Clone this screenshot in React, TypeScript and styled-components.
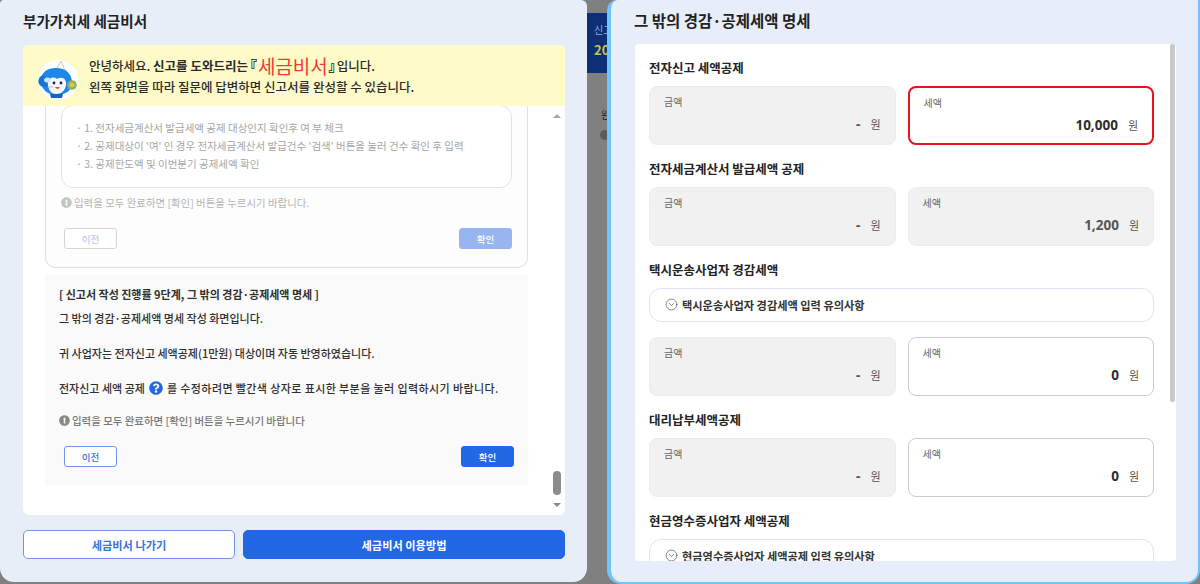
import React from "react";
import styled, { createGlobalStyle } from "styled-components";
import { CircleChevronDown } from "lucide-react";
import { FaExclamationCircle, FaQuestionCircle } from "react-icons/fa";

const Global = createGlobalStyle`
  html, body { margin: 0; padding: 0; background: #808080; }
  * { box-sizing: border-box; }
  body { font-family: "Noto Sans CJK KR", "Noto Sans", sans-serif; }
`;

const Page = styled.div`
  display: flex;
  width: 1200px;
  height: 584px;
  overflow: hidden;
  background: #808080;
`;

const LeftPanel = styled.section`
  width: 587px;
  height: 582px;
  flex: none;
  display: flex;
  flex-direction: column;
  padding: 0 22px 0 23px;
  background: #e8eef8;
  border-radius: 4px 6px 14px 14px;
`;

const PanelTitle = styled.h2<{ $large?: boolean }>`
  height: 45px;
  flex: none;
  margin: 0;
  padding-bottom: 5px;
  display: flex;
  align-items: center;
  font-size: ${(p) => (p.$large ? "15.5px" : "14.6px")};
  font-weight: 700;
  color: #222;
`;

const Body = styled.div`
  height: 470px;
  flex: none;
  display: flex;
  flex-direction: column;
  background: #fff;
  border-radius: 6px;
  overflow: hidden;
`;

const Banner = styled.div`
  height: 61px;
  flex: none;
  display: flex;
  align-items: center;
  gap: 11px;
  padding-left: 15px;
  background: #fffbc8;
`;

const MascotSlot = styled.div`
  width: 40px;
  height: 40px;
  flex: none;
  margin-top: 9px;
`;

const BannerText = styled.div`
  display: flex;
  flex-direction: column;
  font-size: 12.5px;
  font-weight: 500;
  color: #2a2a2a;
`;

const BannerLine = styled.div`
  display: flex;
  align-items: center;
  height: 21px;
  white-space: pre;
`;

const Strong = styled.strong`
  font-weight: 700;
`;

const RedWord = styled.span`
  font-size: 19px;
  font-weight: 400;
  line-height: 21px;
  color: #ee3b30;
`;

const Bracket = styled.span`
  font-feature-settings: "palt";
  font-weight: 900;
  font-size: 14px;
  line-height: 21px;
  color: #111;
`;

const OpenBracket = styled(Bracket)`
  margin: 0 1px 0 2px;
`;

const CloseBracket = styled(Bracket)`
  margin: 0 1px;
`;

const ScrollRow = styled.div`
  flex: 1;
  min-height: 0;
  display: flex;
`;

const Scroller = styled.div`
  flex: 1;
  min-width: 0;
  display: flex;
  flex-direction: column;
  justify-content: flex-end;
  gap: 6px;
  padding: 0 21px 30px 22px;
  overflow: hidden;
`;

const DoneCard = styled.div`
  flex: none;
  padding: 0 15px 18px 15px;
  background: #fdfdfd;
  border: 1px solid #e0e0e0;
  border-top: none;
  border-radius: 0 0 10px 10px;
`;

const NoteBox = styled.ul`
  margin: 0;
  height: 83px;
  padding: 13px 14px;
  list-style: none;
  display: flex;
  flex-direction: column;
  border: 1px solid #e2e2e2;
  border-radius: 12px;
  background: #fff;
`;

const NoteItem = styled.li`
  height: 18px;
  font-size: 10.5px;
  line-height: 18px;
  color: #a6a6a6;
  white-space: nowrap;
`;

const Hint = styled.div<{ $dim?: boolean }>`
  display: flex;
  align-items: center;
  gap: 2px;
  font-size: 10.45px;
  color: ${(p) => (p.$dim ? "#b4b4b4" : "#777")};
  svg { color: ${(p) => (p.$dim ? "#c4c4c4" : "#888")}; flex: none; }
`;

const DoneHint = styled(Hint)`
  height: 28px;
  margin-bottom: 12px;
`;

const Actions = styled.div`
  display: flex;
  justify-content: space-between;
  padding: 0 0 0 3px;
`;

const SmallButton = styled.button<{ $kind: "outline" | "solid"; $dim?: boolean }>`
  width: 53px;
  height: 21px;
  padding: 0;
  font-family: inherit;
  font-size: 9.5px;
  font-weight: 500;
  border-radius: 3px;
  border: 1px solid
    ${(p) => (p.$kind === "solid" ? (p.$dim ? "#97b5ee" : "#2268e4") : p.$dim ? "#d5d5d5" : "#6f97e6")};
  background: ${(p) => (p.$kind === "solid" ? (p.$dim ? "#97b5ee" : "#2268e4") : "#fff")};
  color: ${(p) => (p.$kind === "solid" ? "#fff" : p.$dim ? "#b9c9ec" : "#3a73de")};
`;

const StepCard = styled.div`
  flex: none;
  height: 211px;
  padding: 11px 14px 0 14px;
  background: #fafafa;
  font-size: 11px;
  font-weight: 500;
  color: #2f2f2f;
`;

const StepHeading = styled.div`
  height: 18px;
  line-height: 18px;
  font-weight: 700;
  white-space: nowrap;
`;

const StepLine = styled.div<{ $gap: number }>`
  height: 18px;
  line-height: 18px;
  margin-top: ${(p) => p.$gap}px;
  white-space: nowrap;
  display: flex;
  align-items: center;
`;

const QuestionBadge = styled(FaQuestionCircle)`
  color: #2268e4;
  margin: 0 4px;
  flex: none;
`;

const WideText = styled.span`
  letter-spacing: 0.4px;
`;

const StepHint = styled(Hint)`
  height: 18px;
  margin: 14px 0 17px;
`;

const StepActions = styled(Actions)`
  padding-left: 5px;
`;

const ScrollTrack = styled.div`
  width: 16px;
  flex: none;
  padding: 8px 0 8px;
  display: flex;
  flex-direction: column;
  align-items: center;
  background: #fff;
`;

const ArrowUp = styled.div`
  width: 0;
  height: 0;
  border-left: 4px solid transparent;
  border-right: 4px solid transparent;
  border-bottom: 4px solid #a8a8a8;
`;

const ArrowDown = styled.div`
  width: 0;
  height: 0;
  margin-top: 8px;
  border-left: 4px solid transparent;
  border-right: 4px solid transparent;
  border-top: 4px solid #8a8a8a;
`;

const Thumb = styled.div`
  width: 8px;
  height: 24px;
  margin-top: auto;
  border-radius: 4px;
  background: #8c8c8c;
`;

const Footer = styled.div`
  display: flex;
  gap: 8px;
  margin-top: 15px;
`;

const FooterButton = styled.button<{ $primary?: boolean }>`
  height: 29px;
  padding: 0;
  flex: ${(p) => (p.$primary ? "1" : "0 0 212px")};
  font-family: inherit;
  font-size: 11.2px;
  font-weight: 700;
  border-radius: 5px;
  border: 1px solid ${(p) => (p.$primary ? "#2268e4" : "#6f97e6")};
  background: ${(p) => (p.$primary ? "#2268e4" : "#fff")};
  color: ${(p) => (p.$primary ? "#fff" : "#3a73de")};
`;

const Behind = styled.div`
  width: 20px;
  flex: none;
  padding-top: 13px;
  overflow: hidden;
`;

const BehindBlock = styled.div`
  height: 60px;
  padding: 10px 0 0 7px;
  background: #0e2f74;
  white-space: nowrap;
`;

const BehindLabel = styled.div`
  font-size: 10px;
  line-height: 14px;
  color: #9fb0d3;
`;

const BehindYear = styled.div`
  margin-top: 4px;
  font-size: 13px;
  line-height: 18px;
  font-weight: 700;
  color: #c9c25a;
`;

const BehindMeta = styled.div`
  padding: 35px 0 0 14px;
  font-size: 10px;
  line-height: 14px;
  color: #222;
  white-space: nowrap;
`;

const BehindDot = styled.div`
  width: 10px;
  height: 10px;
  margin: 8px 0 0 13px;
  border-radius: 50%;
  background: #5a5a5a;
`;

const RightPanel = styled.section`
  flex: 1;
  min-width: 0;
  height: 584px;
  display: flex;
  flex-direction: column;
  padding: 0 22px 21px 24px;
  background: #e8eef9;
  border: solid #70c3fb;
  border-width: 0 2px 2px 4px;
  border-radius: 10px 0 14px 14px;
`;

const RightTitle = styled(PanelTitle)`
  height: 44px;
  margin-left: -1px;
`;

const Sheet = styled.div`
  flex: 1;
  min-height: 0;
  display: flex;
  background: #fff;
  border-radius: 4px;
  overflow: hidden;
`;

const SheetContent = styled.div`
  flex: 1;
  min-width: 0;
  padding: 14px 11px 0 14px;
  overflow: hidden;
`;

const SheetBar = styled.div`
  width: 11px;
  flex: none;
  padding-right: 1px;
  display: flex;
  justify-content: flex-end;
`;

const SheetThumb = styled.div`
  width: 5px;
  height: 358px;
  border-radius: 2px;
  background: #c9c9c9;
`;

const Group = styled.div`
  margin-bottom: 14px;
`;

const GroupTitle = styled.h3`
  height: 20px;
  margin: 0 0 8px;
  font-size: 12.5px;
  line-height: 20px;
  font-weight: 700;
  color: #222;
`;

const Notice = styled.div`
  height: 34px;
  margin-bottom: 15px;
  padding: 0 0 1px 15px;
  display: flex;
  align-items: center;
  gap: 4px;
  border: 1px solid #dfe4f2;
  border-radius: 12px;
  font-size: 11.2px;
  font-weight: 700;
  color: #333;
  svg { color: #555; flex: none; }
`;

const FieldRow = styled.div`
  display: grid;
  grid-template-columns: 1fr 1fr;
  gap: 12px;
`;

const Field = styled.div<{ $tone: "locked" | "alert" | "open" }>`
  height: 59px;
  padding: 8px 14px 0 14px;
  display: flex;
  flex-direction: column;
  border-radius: 8px;
  border: ${(p) =>
    p.$tone === "alert" ? "2px solid #e8141c" : p.$tone === "open" ? "1.5px solid #cccccc" : "1px solid #ececec"};
  background: ${(p) => (p.$tone === "locked" ? "#f1f1f1" : "#fff")};
`;

const FieldLabel = styled.span`
  height: 14px;
  font-size: 10px;
  line-height: 14px;
  color: #666;
`;

const FieldValue = styled.div`
  margin-top: 5px;
  display: flex;
  justify-content: flex-end;
  align-items: center;
  gap: 10px;
  height: 20px;
`;

const Amount = styled.span<{ $dark?: boolean }>`
  font-family: "Noto Sans", sans-serif;
  font-size: 13.5px;
  font-weight: 700;
  color: ${(p) => (p.$dark ? "#2c2c2c" : "#555")};
`;

const Unit = styled.span`
  font-size: 11px;
  color: #555;
`;

function Mascot() {
  return (
    <svg width="40" height="40" viewBox="0 0 40 40">
      <circle cx="20" cy="20" r="20" fill="#fff" />
      <path d="M18 10 L23 1 L27 11 Z" fill="#fff" stroke="#c8b9a6" strokeWidth="0.8" />
      <path d="M3 22 C2 14 8 8 18 8 C28 8 34 14 34 23 C34 31 27 35 18 35 C10 35 4 30 3 22 Z" fill="#1e88ea" />
      <path d="M1 24 C-1 20 2 15 6 15 L9 26 C6 28 3 27 1 24 Z" fill="#1872d2" />
      <path d="M10 24 C10 18 15 16 19 19 C24 16 29 19 28 25 C27 31 23 34 18 34 C13 34 10 29 10 24 Z" fill="#f8f6fc" />
      <ellipse cx="9.5" cy="20" rx="3.5" ry="2.5" fill="#cfe4fa" />
      <circle cx="16" cy="23" r="1.4" fill="#1a2440" />
      <circle cx="23" cy="23" r="1.4" fill="#1a2440" />
      <path d="M17 27 Q19.5 31 22 27 Z" fill="#e0523f" />
      <ellipse cx="13" cy="27" rx="2" ry="1.2" fill="#f7c6d0" />
      <path d="M12 34 L25 34 L24 38 L13 38 Z" fill="#1a62bf" />
      <circle cx="34" cy="25" r="4.8" fill="#8cb35a" />
      <circle cx="34" cy="25" r="2.4" fill="#d8c85a" />
    </svg>
  );
}

type Tone = "locked" | "alert" | "open";

function AmountField({ label, value, tone, dark }: { label: string; value: string; tone: Tone; dark?: boolean }) {
  return (
    <Field $tone={tone}>
      <FieldLabel>{label}</FieldLabel>
      <FieldValue>
        <Amount $dark={dark}>{value}</Amount>
        <Unit>원</Unit>
      </FieldValue>
    </Field>
  );
}

function TaxGroup({
  title,
  notice,
  tax,
  tone,
}: {
  title: string;
  notice?: string;
  tax?: string;
  tone?: Tone;
}) {
  return (
    <Group>
      <GroupTitle>{title}</GroupTitle>
      {notice && (
        <Notice>
          <CircleChevronDown size={13} strokeWidth={1.3} />
          {notice}
        </Notice>
      )}
      {tax && tone && (
        <FieldRow>
          <AmountField label="금액" value="-" tone="locked" />
          <AmountField label="세액" value={tax} tone={tone} dark={tone !== "locked"} />
        </FieldRow>
      )}
    </Group>
  );
}

export default function App() {
  return (
    <Page>
      <Global />
      <LeftPanel>
        <PanelTitle>부가가치세 세금비서</PanelTitle>
        <Body>
          <Banner>
            <MascotSlot>
              <Mascot />
            </MascotSlot>
            <BannerText>
              <BannerLine>
                안녕하세요. <Strong>신고를 도와드리는</Strong>
                <OpenBracket>『</OpenBracket>
                <RedWord>세금비서</RedWord>
                <CloseBracket>』</CloseBracket>입니다.
              </BannerLine>
              <BannerLine>왼쪽 화면을 따라 질문에 답변하면 신고서를 완성할 수 있습니다.</BannerLine>
            </BannerText>
          </Banner>
          <ScrollRow>
            <Scroller>
              <DoneCard>
                <NoteBox>
                  <NoteItem>· 1. 전자세금계산서 발급세액 공제 대상인지 확인후 여 부 체크</NoteItem>
                  <NoteItem>· 2. 공제대상이 '여' 인 경우 전자세금계산서 발급건수 '검색' 버튼을 눌러 건수 확인 후 입력</NoteItem>
                  <NoteItem>· 3. 공제한도액 및 이번분기 공제세액 확인</NoteItem>
                </NoteBox>
                <DoneHint $dim>
                  <FaExclamationCircle size={11} />
                  입력을 모두 완료하면 [확인] 버튼을 누르시기 바랍니다.
                </DoneHint>
                <Actions>
                  <SmallButton $kind="outline" $dim>이전</SmallButton>
                  <SmallButton $kind="solid" $dim>확인</SmallButton>
                </Actions>
              </DoneCard>
              <StepCard>
                <StepHeading>[ 신고서 작성 진행률 9단계, 그 밖의 경감·공제세액 명세 ]</StepHeading>
                <StepLine $gap={6}>그 밖의 경감·공제세액 명세 작성 화면입니다.</StepLine>
                <StepLine $gap={17}>귀 사업자는 전자신고 세액공제(1만원) 대상이며 자동 반영하였습니다.</StepLine>
                <StepLine $gap={17}>
                  전자신고 세액 공제
                  <QuestionBadge size={14} />
                  <WideText>를 수정하려면 빨간색 상자로 표시한 부분을 눌러 입력하시기 바랍니다.</WideText>
                </StepLine>
                <StepHint>
                  <FaExclamationCircle size={11} />
                  입력을 모두 완료하면 [확인] 버튼을 누르시기 바랍니다
                </StepHint>
                <StepActions>
                  <SmallButton $kind="outline">이전</SmallButton>
                  <SmallButton $kind="solid">확인</SmallButton>
                </StepActions>
              </StepCard>
            </Scroller>
            <ScrollTrack>
              <ArrowUp />
              <Thumb />
              <ArrowDown />
            </ScrollTrack>
          </ScrollRow>
        </Body>
        <Footer>
          <FooterButton>세금비서 나가기</FooterButton>
          <FooterButton $primary>세금비서 이용방법</FooterButton>
        </Footer>
      </LeftPanel>
      <Behind>
        <BehindBlock>
          <BehindLabel>신고</BehindLabel>
          <BehindYear>20</BehindYear>
        </BehindBlock>
        <BehindMeta>완</BehindMeta>
        <BehindDot />
      </Behind>
      <RightPanel>
        <RightTitle $large>그 밖의 경감·공제세액 명세</RightTitle>
        <Sheet>
          <SheetContent>
            <TaxGroup title="전자신고 세액공제" tax="10,000" tone="alert" />
            <TaxGroup title="전자세금계산서 발급세액 공제" tax="1,200" tone="locked" />
            <TaxGroup title="택시운송사업자 경감세액" notice="택시운송사업자 경감세액 입력 유의사항" tax="0" tone="open" />
            <TaxGroup title="대리납부세액공제" tax="0" tone="open" />
            <TaxGroup title="현금영수증사업자 세액공제" notice="현금영수증사업자 세액공제 입력 유의사항" />
          </SheetContent>
          <SheetBar>
            <SheetThumb />
          </SheetBar>
        </Sheet>
      </RightPanel>
    </Page>
  );
}
